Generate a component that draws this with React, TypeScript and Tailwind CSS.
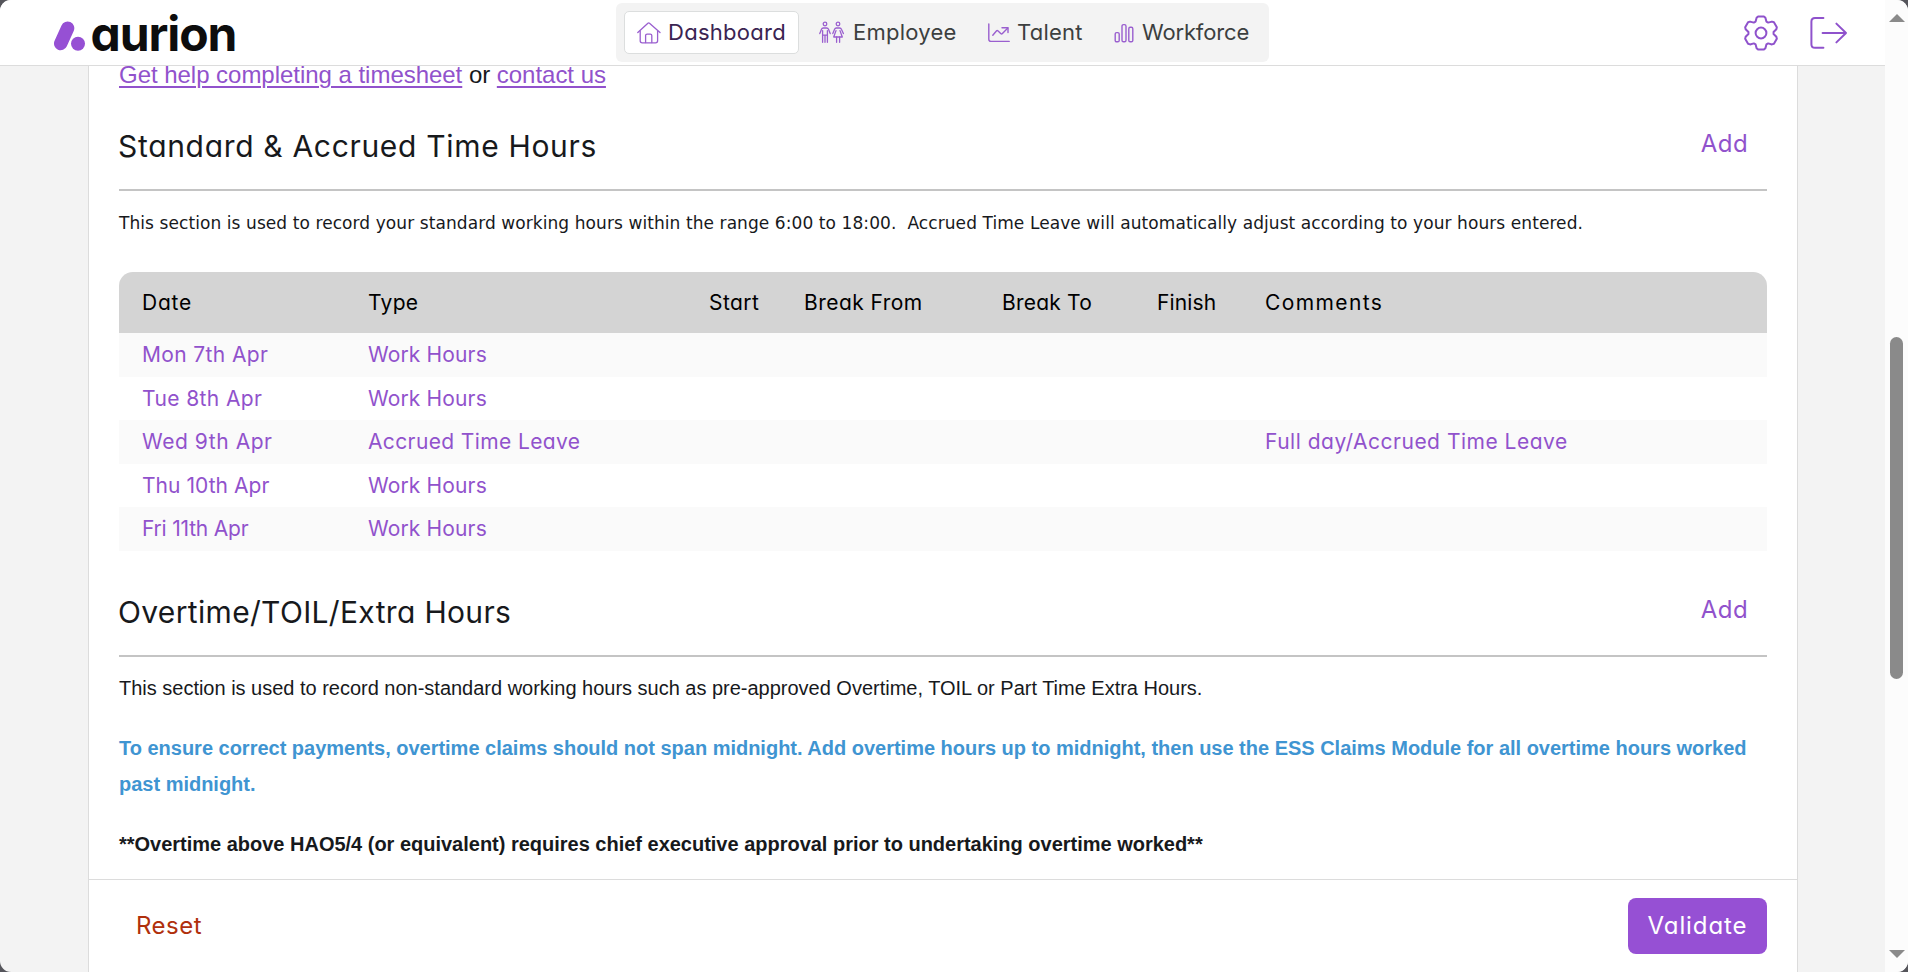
import type { ReactNode } from 'react';

function gearPath(cx: number, cy: number): string {
  const tooth: [number, number][] = [
    [-5.4, -11.4], [-4.4, -15.2], [-2.9, -16.6], [2.9, -16.6], [4.4, -15.2], [5.4, -11.4],
  ];
  const points: string[] = [];
  for (let k = 0; k < 6; k++) {
    const a = (k * Math.PI) / 3;
    for (const [x, y] of tooth) {
      const px = cx + x * Math.cos(a) - y * Math.sin(a);
      const py = cy + x * Math.sin(a) + y * Math.cos(a);
      points.push(px.toFixed(2) + ' ' + py.toFixed(2));
    }
  }
  return 'M' + points.join('L') + 'Z';
}

function LogoMark() {
  return (
    <svg width="34" height="32" viewBox="0 0 34 32" className="shrink-0">
      <path d="M7.7 23.6 14.6 8.2" stroke="#9650d4" strokeWidth="13.4" strokeLinecap="round" />
      <circle cx="25" cy="23.8" r="7" fill="#9650d4" />
    </svg>
  );
}

function HomeIcon() {
  return (
    <svg width="24" height="23" viewBox="0 0 24 23" fill="none" stroke="#9a5fcf" strokeWidth="1.3" strokeLinecap="round" strokeLinejoin="round" className="shrink-0">
      <path d="M.8 11.6 10.9 2.2q.8-.7 1.6 0L23 11.6" />
      <path d="M3.2 10V19.8q0 2 2 2H18.6q2 0 2-2V10" />
      <path d="M8.6 21.6V14.6q0-1.5 1.5-1.5h3.2q1.5 0 1.5 1.5V21.6" />
    </svg>
  );
}

function PeopleIcon() {
  return (
    <svg width="26" height="23" viewBox="0 0 26 23" fill="none" stroke="#9a5fcf" strokeWidth="1.3" strokeLinecap="round" strokeLinejoin="round" className="shrink-0">
      <circle cx="6" cy="3" r="1.8" />
      <path d="M.8 12.6 2.5 8.2Q3 7 4.3 7H7.7Q9 7 9.5 8.2L11.2 12.6" />
      <path d="M3.6 9.6V21.3M8.4 9.6V21.3M6 14.4V21.3M3.6 14.2H8.4" />
      <circle cx="19" cy="3" r="1.8" />
      <path d="M13.8 12.6 15.6 8.2Q16.1 7 17.3 7H20.7Q21.9 7 22.4 8.2L24.4 12.6" />
      <path d="M17 9.6 14.7 16H23.3L21 9.6" />
      <path d="M17.6 16V21.3M20.6 16V21.3" />
    </svg>
  );
}

function TrendIcon() {
  return (
    <svg width="22" height="20" viewBox="0 0 22 20" fill="none" stroke="#9a5fcf" strokeWidth="1.4" strokeLinecap="round" strokeLinejoin="round" className="shrink-0">
      <path d="M.8.9V16.3q0 2.1 2.1 2.1H21.2" />
      <path d="M4.8 12.2 8.6 7.7q.6-.6 1.2 0L13 10.8q.6.5 1.2 0L19.8 5" />
      <path d="M14 4.8H20V9.6" />
    </svg>
  );
}

function BarsIcon() {
  return (
    <svg width="20" height="20" viewBox="0 0 20 20" fill="none" stroke="#9a5fcf" strokeWidth="1.4" className="shrink-0">
      <rect x="1.2" y="9.6" width="4" height="9.2" rx="1.4" />
      <rect x="8" y="1.6" width="4" height="17.2" rx="1.6" />
      <rect x="14.8" y="4.3" width="4" height="14.5" rx="1.4" />
    </svg>
  );
}

function GearIcon() {
  return (
    <svg width="36" height="38" viewBox="0 0 36 38" fill="none" stroke="#8f52cc" strokeWidth="2" strokeLinejoin="round">
      <path d={gearPath(18, 19)} />
      <circle cx="18" cy="19" r="5.4" />
    </svg>
  );
}

function LogoutIcon() {
  return (
    <svg width="38" height="32" viewBox="0 0 38 32" fill="none" stroke="#8f52cc" strokeWidth="2" strokeLinecap="round" strokeLinejoin="round">
      <path d="M13.4 1.1H5q-3.6 0-3.6 3.6V27.2q0 3.6 3.6 3.6H13.4" />
      <path d="M12.6 16H36M26.4 6.6 36 16 26.4 25.4" />
    </svg>
  );
}

const rows = [
  { date: 'Mon 7th Apr', dateCls: 'tracking-[0.37px]', type: 'Work Hours', typeCls: 'tracking-[0.14px]', comment: '' },
  { date: 'Tue 8th Apr', dateCls: 'tracking-[0.4px]', type: 'Work Hours', typeCls: 'tracking-[0.14px]', comment: '' },
  { date: 'Wed 9th Apr', dateCls: 'tracking-[0.56px]', type: 'Accrued Time Leave', typeCls: 'tracking-[0.38px]', comment: 'Full day/Accrued Time Leave' },
  { date: 'Thu 10th Apr', dateCls: 'tracking-[0.05px]', type: 'Work Hours', typeCls: 'tracking-[0.14px]', comment: '' },
  { date: 'Fri 11th Apr', dateCls: 'tracking-[-0.2px]', type: 'Work Hours', typeCls: 'tracking-[0.14px]', comment: '' },
];

const columns = 'grid grid-cols-[226px_341px_95px_198px_155px_108px_1fr] pl-[23px] text-[21px] whitespace-nowrap';

function SectionHeader({ children }: { children: ReactNode }) {
  return (
    <div className="flex h-[99px] items-start justify-between border-b-2 border-[#c4c4c4] pt-8 pr-[19px]">
      {children}
      <button className="text-[24px] leading-10 tracking-[0.4px] text-[#9152cc]">Add</button>
    </div>
  );
}

export default function App() {
  return (
    <div className="h-[972px] w-[1908px] overflow-hidden bg-[#55555b] font-['Inter',sans-serif] [font-feature-settings:'cv11']">
      <div className="flex h-full overflow-hidden rounded-[11px] bg-[#f3f3f3]">
        <div className="flex w-[1885px] flex-col">
          <header className="flex h-[66px] shrink-0 items-start border-b border-[#dcdcdc] bg-white">
            <div className="flex w-[616px] items-start pl-[53px]">
              <div className="pt-[20px]">
                <LogoMark />
              </div>
              <span className="ml-[3.5px] pt-px text-[48px] leading-[65px] font-bold tracking-[-1.1px] text-[#0d0d0d]">aurion</span>
            </div>
            <nav className="mt-[3px] flex h-[59px] w-[653px] items-center rounded-md bg-[#f3f3f3] pl-2 text-[22px] text-[#3c3f3f]">
              <a className="flex h-[43px] w-[175px] items-center gap-[7px] rounded-[5px] border border-[#dcdede] bg-white pl-3 tracking-[0.28px] text-[#3b2452]">
                <HomeIcon />
                Dashboard
              </a>
              <a className="ml-5 flex w-[149px] items-center gap-2 tracking-[0.25px]">
                <PeopleIcon />
                Employee
              </a>
              <a className="ml-5 flex w-[106px] items-center gap-[7px] tracking-[0.25px]">
                <TrendIcon />
                Talent
              </a>
              <a className="ml-5 flex items-center gap-2 tracking-[-0.15px]">
                <BarsIcon />
                Workforce
              </a>
            </nav>
            <div className="ml-auto flex h-[65px] items-center gap-[31px] pr-[37.5px]">
              <GearIcon />
              <LogoutIcon />
            </div>
          </header>

          <main className="ml-[88px] flex h-[906px] w-[1710px] flex-col border-x border-[#dcdcdc] bg-white">
            <div className="h-[813px] overflow-hidden px-[30px] text-[#17191c]">
              <div className="-mt-[9px] h-[35px] font-['Liberation_Sans',sans-serif] text-[24px] leading-9 tracking-[-0.03px]">
                <a className="text-[#9152cc] underline decoration-2 underline-offset-[3px]">Get help completing a timesheet</a>
                {' or '}
                <a className="text-[#9152cc] underline decoration-2 underline-offset-[3px]">contact us</a>
              </div>

              <SectionHeader>
                <h2 className="-ml-px text-[30px] leading-[45px] tracking-[0.68px]">Standard &amp; Accrued Time Hours</h2>
              </SectionHeader>
              <p className="h-[81px] pt-[14px] font-['DejaVu_Sans',sans-serif] text-[17px] leading-9 tracking-[0.08px] whitespace-pre">
                {'This section is used to record your standard working hours within the range 6:00 to 18:00.  Accrued Time Leave will automatically adjust according to your hours entered.'}
              </p>

              <div className="overflow-hidden rounded-t-[14px]">
                <div className={`${columns} h-[61px] bg-[#d4d4d4] leading-[62px] text-black`}>
                  <span className="tracking-[0.75px]">Date</span>
                  <span className="tracking-[0.3px]">Type</span>
                  <span className="tracking-[0.45px]">Start</span>
                  <span className="tracking-[0.45px]">Break From</span>
                  <span className="tracking-[0.2px]">Break To</span>
                  <span className="tracking-[0.15px]">Finish</span>
                  <span className="tracking-[1.4px]">Comments</span>
                </div>
                {rows.map((row) => (
                  <div key={row.date} className={`${columns} h-[43.5px] leading-[44px] text-[#9152cc] odd:bg-white even:bg-[#fafafa]`}>
                    <span className={row.dateCls}>{row.date}</span>
                    <span className={row.typeCls}>{row.type}</span>
                    <span className="col-start-7 tracking-[0.5px]">{row.comment}</span>
                  </div>
                ))}
              </div>

              <div className="mt-[7.5px]">
                <SectionHeader>
                  <h2 className="-ml-px text-[30px] leading-[45px] tracking-[0.33px]">Overtime/TOIL/Extra Hours</h2>
                </SectionHeader>
              </div>
              <div className="pt-[13px] font-['Liberation_Sans',sans-serif] text-[20px] leading-9 tracking-[-0.01px]">
                <p>This section is used to record non-standard working hours such as pre-approved Overtime, TOIL or Part Time Extra Hours.</p>
                <p className="mt-6 font-bold text-[#3f95d2]">
                  To ensure correct payments, overtime claims should not span midnight. Add overtime hours up to midnight, then use the ESS Claims Module for all overtime hours worked past midnight.
                </p>
                <p className="mt-6 font-bold">**Overtime above HAO5/4 (or equivalent) requires chief executive approval prior to undertaking overtime worked**</p>
              </div>
            </div>

            <footer className="flex h-[93px] items-start justify-between border-t border-[#dcdcdc] pt-[18px] pr-[30px] pl-[47px] text-[24px]">
              <button className="h-14 pb-px tracking-[0.5px] text-[#b0300c]">Reset</button>
              <button className="h-14 w-[139px] rounded-lg bg-[#9650d4] pb-px tracking-[0.9px] text-white">Validate</button>
            </footer>
          </main>
        </div>

        <div className="flex w-[23px] flex-col items-center bg-[#fcfcfc] pt-[14px] pb-[14px]">
          <svg width="16" height="8" viewBox="0 0 16 8">
            <path d="M8 0 16 8H0Z" fill="#8a8a8a" />
          </svg>
          <div className="mt-[315px] h-[342px] w-[13px] rounded-full bg-[#8a8a8a]" />
          <svg width="16" height="8" viewBox="0 0 16 8" className="mt-auto">
            <path d="M0 0H16L8 8Z" fill="#8a8a8a" />
          </svg>
        </div>
      </div>
    </div>
  );
}
